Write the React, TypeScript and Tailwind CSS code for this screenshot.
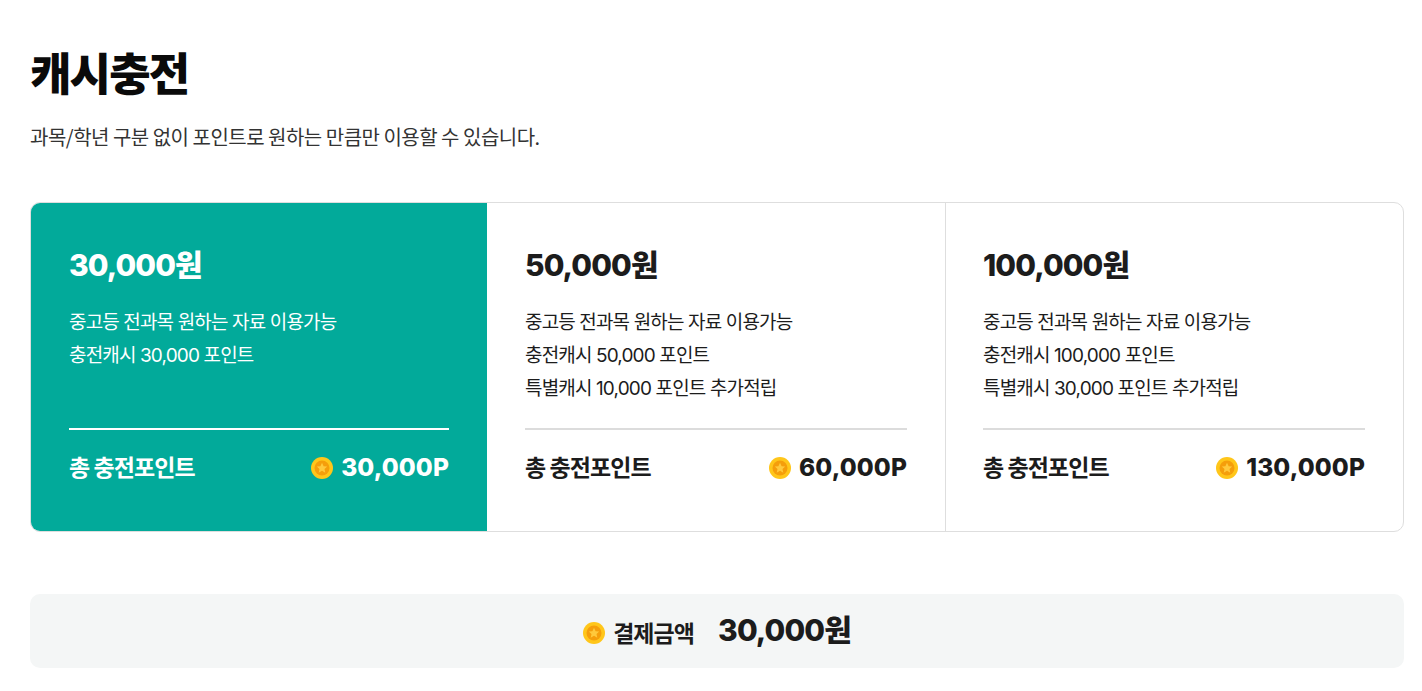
const KR = "font-['Noto_Sans_CJK_KR','Noto_Sans',sans-serif]";
const BODY = "font-['Inter','Noto_Sans_CJK_KR',sans-serif]";
const NUM = "font-['Inter','Noto_Sans_CJK_KR',sans-serif]";

const plans = [
  {
    price: '30,000원',
    lines: ['중고등 전과목 원하는 자료 이용가능', '충전캐시 30,000 포인트'],
    total: '30,000P',
    active: true,
  },
  {
    price: '50,000원',
    lines: ['중고등 전과목 원하는 자료 이용가능', '충전캐시 50,000 포인트', '특별캐시 10,000 포인트 추가적립'],
    total: '60,000P',
    active: false,
  },
  {
    price: '100,000원',
    lines: ['중고등 전과목 원하는 자료 이용가능', '충전캐시 100,000 포인트', '특별캐시 30,000 포인트 추가적립'],
    total: '130,000P',
    active: false,
  },
];

const Coin = ({ className = '' }: { className?: string }) => (
  <svg width="22" height="22" viewBox="0 0 22 22" className={`shrink-0 ${className}`}>
    <circle cx="11" cy="11" r="11" fill="#ffc61a" />
    <circle cx="11" cy="11" r="7.5" fill="#f59e0b" />
    <path d="M11 5.8l1.6 3.4 3.6.4-2.7 2.5.8 3.6-3.3-1.9-3.3 1.9.8-3.6-2.7-2.5 3.6-.4z" fill="#ffc93c" />
  </svg>
);

export default function App() {
  return (
    <div className={`w-[1422px] h-[691px] overflow-hidden bg-white pl-[30px] pr-[18px] pt-[42px] text-[#1c1c1c] ${KR}`}>
      <h1 className="h-[60px] text-[45px] leading-[60px] font-black tracking-[-0.04em] text-[#0a0a0a]">캐시충전</h1>
      <p className="mt-[22px] h-[26px] text-[20px] leading-[26px] tracking-[-0.025em] text-[#333]">
        과목/학년 구분 없이 포인트로 원하는 만큼만 이용할 수 있습니다.
      </p>

      <div className="mt-[52px] grid h-[330px] grid-cols-[456px_458px_458px] overflow-hidden rounded-[10px] border border-[#dedede]">
        {plans.map((plan, i) => (
          <div
            key={plan.price}
            className={`flex flex-col px-[38px] ${
              plan.active
                ? '-my-px -ml-px bg-[#02aa9a] pl-[39px] pt-[42px] text-white'
                : `pt-[41px] ${i === 2 ? 'border-l border-[#dedede] pl-[37px]' : ''}`
            }`}
          >
            <div className={`${NUM} h-[42px] text-[30px] leading-[42px] font-extrabold tracking-[-0.03em]`}>{plan.price}</div>
            <div className={`${BODY} mt-[20px] h-[122px] text-[19px] leading-[33px] tracking-[-0.045em]`}>
              {plan.lines.map((line) => (
                <div key={line}>{line}</div>
              ))}
            </div>
            <div className={`h-[2px] ${plan.active ? 'bg-white' : 'bg-[#dcdcdc]'}`} />
            <div className="mt-[19px] flex h-[36px] items-center justify-between">
              <span className="-mt-[2px] text-[23px] font-bold tracking-[-0.04em]">총 충전포인트</span>
              <span className="flex items-center gap-[8px]">
                <Coin className="mt-[2px]" />
                <span className={`${NUM} text-[24.5px] font-extrabold tracking-[0.005em]`}>{plan.total}</span>
              </span>
            </div>
          </div>
        ))}
      </div>

      <div className="mt-[62px] flex h-[74px] items-center justify-center rounded-[10px] bg-[#f4f6f6]">
        <Coin className="mt-[4px]" />
        <span className="ml-[8px] mt-[2px] text-[23px] font-bold tracking-[-0.04em]">결제금액</span>
        <span className={`${NUM} ml-[24px] -mt-[2px] text-[30px] font-extrabold tracking-[-0.03em]`}>30,000원</span>
      </div>
    </div>
  );
}
